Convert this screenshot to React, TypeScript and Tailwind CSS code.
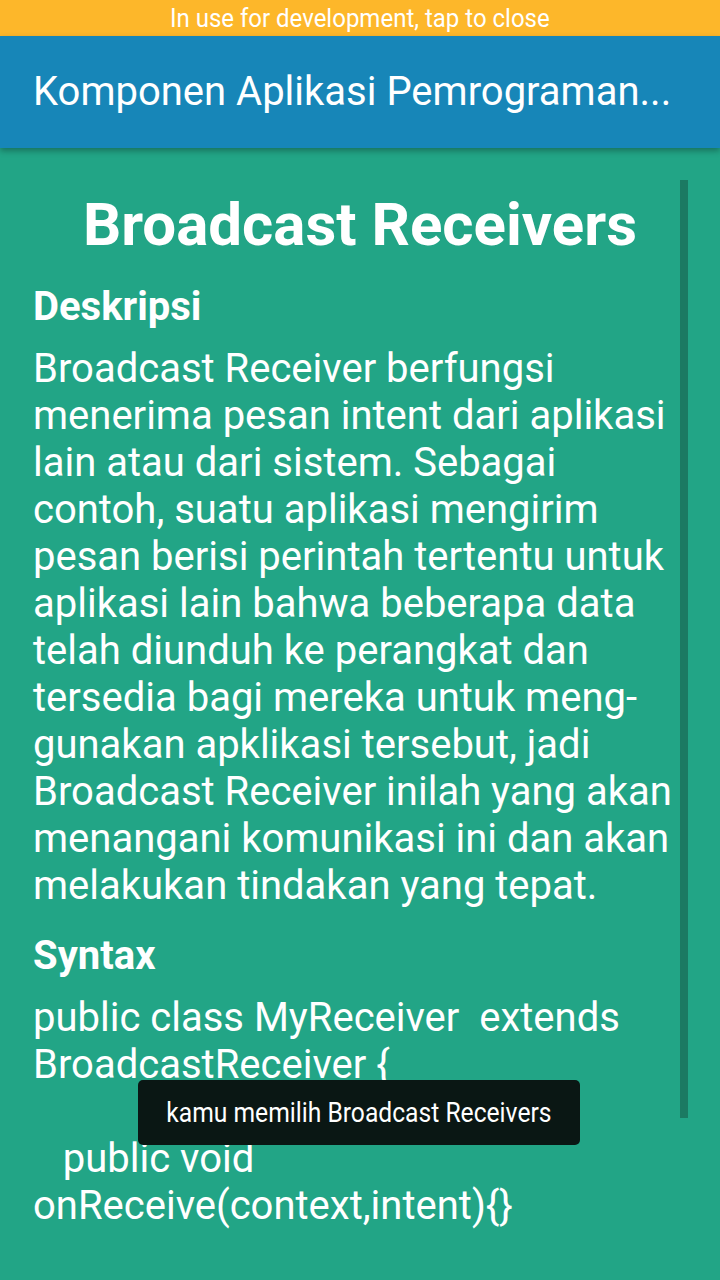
import React from "react";

export default function App() {
  return (
    <div
      className="relative w-[720px] h-[1280px] overflow-hidden bg-[#22a586] text-white"
      style={{ fontFamily: "Roboto, 'Noto Sans', sans-serif" }}
    >
      <div className="h-[36px] bg-[#fdb72a] flex items-center justify-center text-white">
        <span className="text-[25px] leading-none whitespace-nowrap scale-x-[0.96]">In use for development, tap to close</span>
      </div>
      <div className="relative z-10 h-[112px] bg-[#1786b8] flex items-center px-[33px] shadow-[0_3px_6px_rgba(0,0,0,0.3)]">
        <div className="text-[40px] leading-none whitespace-nowrap">Komponen Aplikasi Pemrograman...</div>
      </div>
      <div className="relative pl-[33px] pr-[40px] pt-[42px]">
        <div className="text-center font-bold text-[60px] leading-[70px] pl-[7px]">Broadcast Receivers</div>
        <div className="mt-[23px] font-bold text-[40px] leading-[47px]">Deskripsi</div>
        <div className="mt-[15px] text-[40px] leading-[47px] whitespace-nowrap">
          Broadcast Receiver berfungsi
          <br />
          menerima pesan intent dari aplikasi
          <br />
          lain atau dari sistem. Sebagai
          <br />
          contoh, suatu aplikasi mengirim
          <br />
          pesan berisi perintah tertentu untuk
          <br />
          aplikasi lain bahwa beberapa data
          <br />
          telah diunduh ke perangkat dan
          <br />
          tersedia bagi mereka untuk meng-
          <br />
          gunakan apklikasi tersebut, jadi
          <br />
          Broadcast Receiver inilah yang akan
          <br />
          menangani komunikasi ini dan akan
          <br />
          melakukan tindakan yang tepat.
        </div>
        <div className="mt-[23px] font-bold text-[40px] leading-[47px]">Syntax</div>
        <div className="mt-[15px] text-[40px] leading-[47px] whitespace-pre">
          {"public class MyReceiver  extends\nBroadcastReceiver {\n\n   public void\nonReceive(context,intent){}"}
        </div>
      </div>
      <div className="absolute left-[680px] top-[180px] w-[8px] h-[938px] bg-[#1b7a62]" />
      <div className="absolute left-[138px] top-[1080px] w-[442px] h-[65px] rounded-[5px] bg-[#0a1714] flex items-center justify-center">
        <span className="text-[28px] leading-none whitespace-nowrap scale-x-[0.88]">kamu memilih Broadcast Receivers</span>
      </div>
    </div>
  );
}
